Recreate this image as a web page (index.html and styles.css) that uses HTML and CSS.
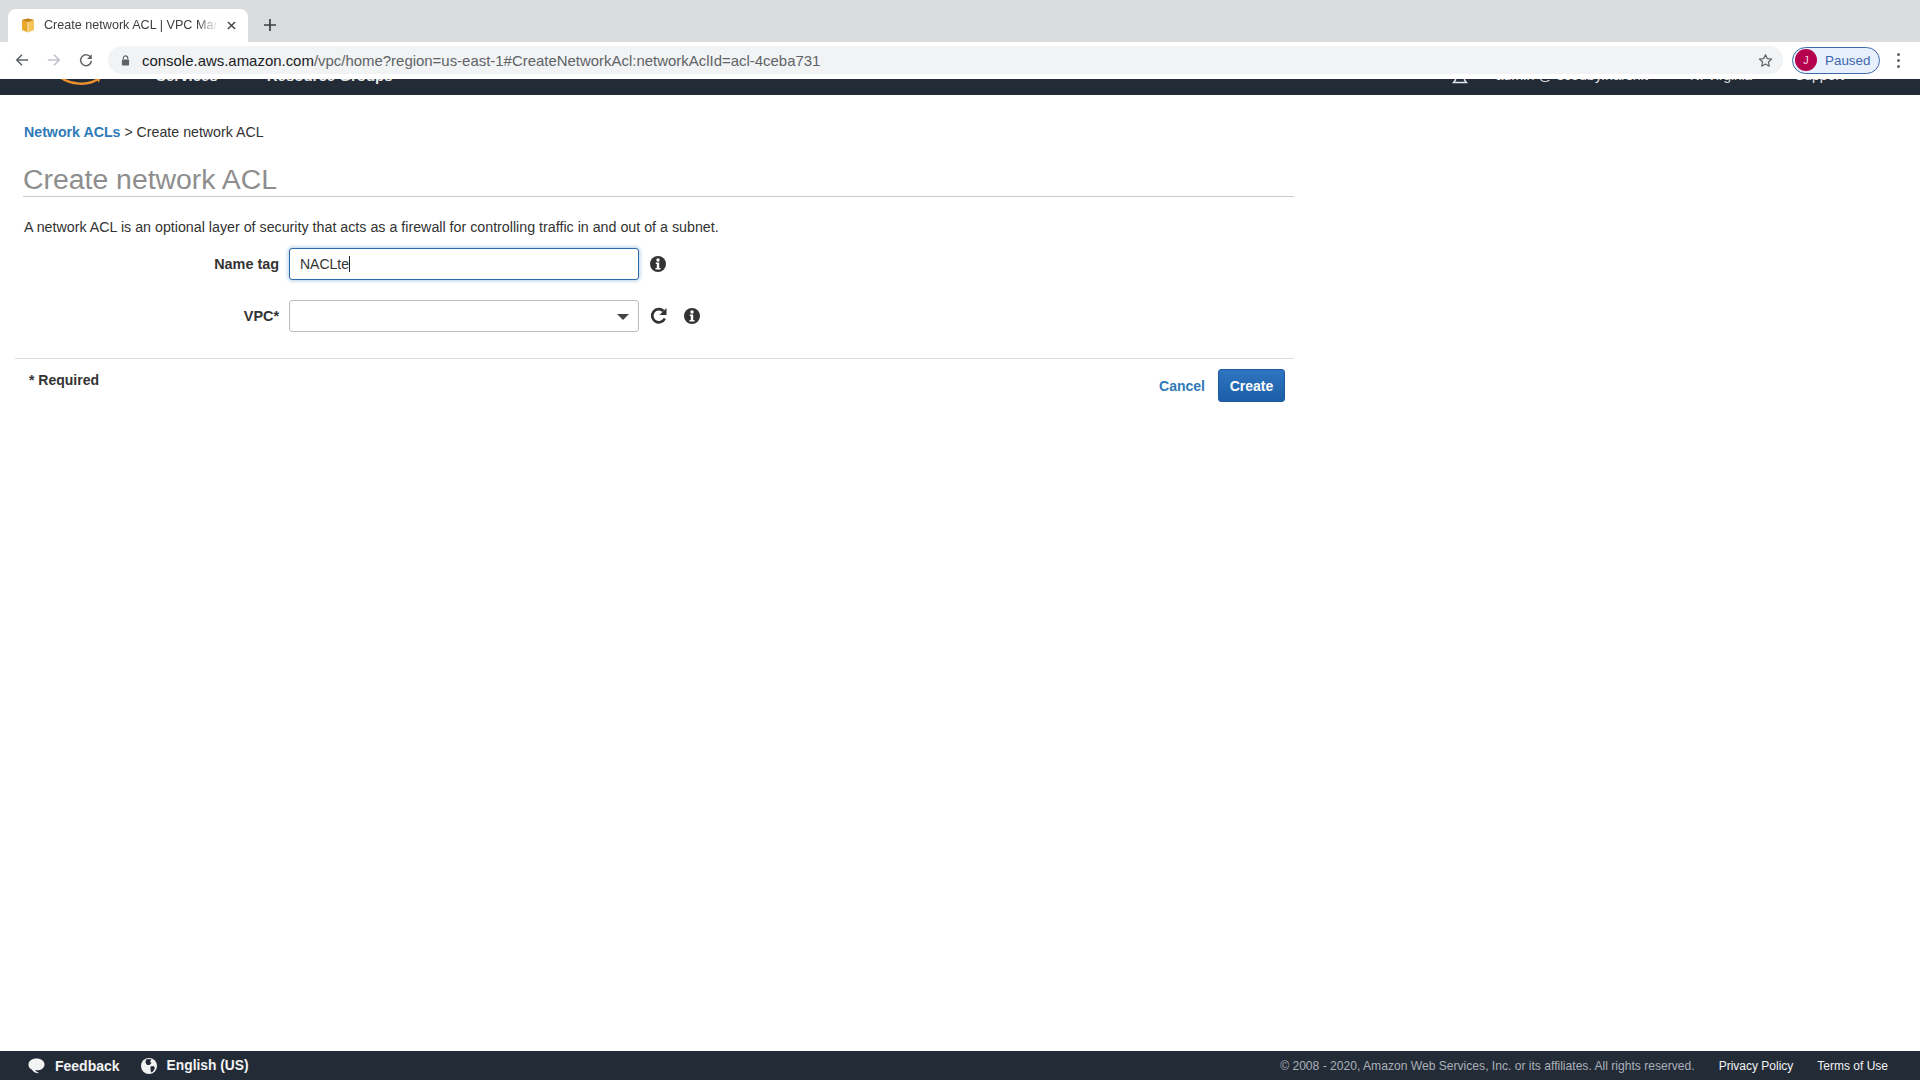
FILE: index.html
```html
<!DOCTYPE html>
<html lang="en">
<head>
  <meta charset="UTF-8">
  <title>Create network ACL | VPC Management Console</title>
  <link rel="stylesheet" href="styles.css">
</head>
<body>
  <div class="tabstrip">
    <div class="tab">
      <svg class="tab-icon" viewBox="0 0 16 16"><path d="M8 1.500 2 3v10l6 2.500z" fill="#e8a92c"/><path d="M8 1.500 14 3v10l-6 2.500z" fill="#f5c35a"/><path d="M2 3l6 2 6-2-6-1.500z" fill="#c9851c"/><path d="M8 5v10.500" stroke="#fff" stroke-width=".7"/></svg>
      <span class="tab-title">Create network ACL | VPC Management Console</span>
      <svg class="tab-close" viewBox="0 0 10 10"><path d="M1 1l8 8M9 1 1 9" stroke="#3c4043" stroke-width="1.500"/></svg>
    </div>
    <svg class="tab-new" viewBox="0 0 12 12"><path d="M6 0v12M0 6h12" stroke="#3c4043" stroke-width="1.700"/></svg>
  </div>

  <div class="toolbar">
    <svg class="nav-btn" viewBox="0 0 16 16"><path d="M15 8H2M8 2 2 8l6 6" fill="none" stroke="#5f6368" stroke-width="1.700"/></svg>
    <svg class="nav-btn off" viewBox="0 0 16 16"><path d="M1 8h13M8 2l6 6-6 6" fill="none" stroke="#bdc1c6" stroke-width="1.700"/></svg>
    <svg class="nav-btn" viewBox="0 0 16 16"><path d="M13.600 5.500A6.200 6.200 0 1 0 14.200 9" fill="none" stroke="#5f6368" stroke-width="1.700"/><path d="M14.600 1.400v5.400H9.200z" fill="#5f6368"/></svg>
    <div class="omnibox">
      <svg class="lock" viewBox="0 0 10 12"><path d="M2.500 5V3.400a2.500 2.500 0 0 1 5 0V5" fill="none" stroke="#5f6368" stroke-width="1.200"/><rect x="1" y="5" width="8" height="6.500" rx="1" fill="#5f6368"/></svg>
      <span class="url"><b>console.aws.amazon.com</b>/vpc/home?region=us-east-1#CreateNetworkAcl:networkAclId=acl-4ceba731</span>
      <svg class="star" viewBox="0 0 16 16"><path d="M8 1.800l1.900 4.200 4.600.5-3.400 3.100.9 4.500L8 11.800l-4 2.300.9-4.500L1.500 6.500l4.600-.5z" fill="none" stroke="#5f6368" stroke-width="1.300" stroke-linejoin="round"/></svg>
    </div>
    <div class="profile">
      <span class="avatar">J</span>
      <span class="paused">Paused</span>
    </div>
    <div class="kebab"><i></i><i></i><i></i></div>
  </div>

  <div class="awsnav">
    <div class="awsnav-inner">
      <svg class="smile" viewBox="0 0 44 12"><path d="M2 1c10 8 28 9 38 2" fill="none" stroke="#ec912d" stroke-width="2.400"/><path d="M36 1l7-.5-2 6z" fill="#ec912d"/></svg>
      <span class="navitem services">Services</span>
      <span class="navitem groups">Resource Groups</span>
      <span class="navitem pin">*</span>
      <svg class="bell" viewBox="0 0 16 16"><path d="M8 1c3 0 4.500 2.500 4.500 5v4l2 2.500h-13l2-2.500V6C3.500 3.500 5 1 8 1z" fill="none" stroke="#e6e8ea" stroke-width="1.400"/></svg>
      <span class="navitem account">admin @ scouby.harshit</span>
      <span class="navitem region">N. Virginia</span>
      <span class="navitem support">Support</span>
    </div>
  </div>

  <main class="page">
    <div class="crumbs"><a class="link" href="#">Network ACLs</a> &gt; Create network ACL</div>
    <h1>Create network ACL</h1>
    <p class="intro">A network ACL is an optional layer of security that acts as a firewall for controlling traffic in and out of a subnet.</p>

    <div class="row first">
      <label class="row-label">Name tag</label>
      <div class="field focused">NACLte<span class="caret"></span></div>
      <svg class="info" viewBox="0 0 16 16"><circle cx="8" cy="8" r="8" fill="#333"/><circle cx="8" cy="4" r="1.700" fill="#fff"/><path d="M5.800 6.500h3.400v5.500h1.300v1.600h-5v-1.600h1.300V8.100H5.800z" fill="#fff"/></svg>
    </div>
    <div class="row second">
      <label class="row-label">VPC*</label>
      <div class="field select"><span class="arrow"></span></div>
      <svg class="refresh" viewBox="0 0 18 18"><path d="M14.800 11.500A6.600 6.600 0 1 1 13.500 4" fill="none" stroke="#333" stroke-width="2.700"/><path d="M16.500 1v7h-7z" fill="#333"/></svg>
      <svg class="info spaced" viewBox="0 0 16 16"><circle cx="8" cy="8" r="8" fill="#333"/><circle cx="8" cy="4" r="1.700" fill="#fff"/><path d="M5.800 6.500h3.400v5.500h1.300v1.600h-5v-1.600h1.300V8.100H5.800z" fill="#fff"/></svg>
    </div>

    <div class="actions">
      <span class="required">* Required</span>
      <div class="buttons">
        <a class="cancel" href="#">Cancel</a>
        <button class="btn-create">Create</button>
      </div>
    </div>
  </main>

  <footer class="footer">
    <svg class="foot-icon" viewBox="0 0 18 16"><path d="M9 0c5 0 8.500 2.800 8.500 6.300S14 12.600 9.500 12.600c-.7 0-1.300 0-2-.1.800 1 2.500 2.400 4.500 3-3 .4-6.500-.8-8-3.800C1.600 10.700.5 8.700.5 6.300.5 2.800 4 0 9 0z" fill="#f2f3f3"/></svg>
    <span class="foot-strong feedback">Feedback</span>
    <svg class="foot-icon globe" viewBox="0 0 16 16"><circle cx="8" cy="8" r="8" fill="#f2f3f3"/><path d="M5 1.500c2-.8 4-.6 5.500 0L9 3.500l1.500 1.500-2 2H6L4.500 4.500zM9.500 8.500l3-.5 1.500 2-2 3.500-2 1-.5-3z" fill="#232b37"/></svg>
    <span class="foot-strong lang">English (US)</span>
    <span class="copyright">© 2008 - 2020, Amazon Web Services, Inc. or its affiliates. All rights reserved.</span>
    <a class="foot-link" href="#">Privacy Policy</a>
    <a class="foot-link terms" href="#">Terms of Use</a>
  </footer>
</body>
</html>
```

FILE: styles.css
```css
html, body {
  height: 100%;
}

body {
  margin: 0;
  display: flex;
  flex-direction: column;
  height: 1080px;
  overflow: hidden;
  background-color: #fff;
  color: #333;
  font-family: "Liberation Sans", Arial, sans-serif;
  font-size: 14.2px;
}

/* browser chrome */
.tabstrip {
  height: 42px;
  flex: none;
  display: flex;
  align-items: flex-end;
  background-color: #dadce0;
  padding-left: 8px;
}

.tab {
  width: 240px;
  height: 33px;
  display: flex;
  align-items: center;
  box-sizing: border-box;
  padding: 0 12px 1px;
  background-color: #fff;
  border-radius: 8px 8px 0 0;
}

.tab-icon {
  width: 16px;
  height: 16px;
  flex: none;
}

.tab-title {
  width: 174px;
  margin-left: 8px;
  white-space: nowrap;
  overflow: hidden;
  font-size: 12.6px;
  color: #3c4043;
  -webkit-mask-image: linear-gradient(to right, #000 88%, transparent);
  mask-image: linear-gradient(to right, #000 88%, transparent);
}

.tab-close {
  width: 9px;
  height: 9px;
  margin-left: 9px;
  flex: none;
}

.tab-new {
  width: 12px;
  height: 12px;
  margin: 0 0 11px 16px;
}

.toolbar {
  height: 37px;
  flex: none;
  display: flex;
  align-items: center;
  box-sizing: border-box;
  padding: 0 0 1px 15px;
  background-color: #fff;
}

.nav-btn {
  width: 14px;
  height: 14px;
  margin-right: 18px;
  flex: none;
}

.omnibox {
  width: 1675px;
  height: 28px;
  margin-left: -3px;
  display: flex;
  align-items: center;
  box-sizing: border-box;
  padding: 0 10px 0 13px;
  background-color: #f1f3f4;
  border-radius: 14px;
}

.lock {
  width: 9px;
  height: 11px;
  flex: none;
}

.url {
  flex: 1;
  margin-left: 12px;
  font-size: 14.95px;
  color: #5f6368;
  white-space: nowrap;
}

.url b {
  font-weight: normal;
  color: #202124;
}

.star {
  width: 15px;
  height: 15px;
  flex: none;
}

.profile {
  width: 88px;
  height: 27px;
  margin-left: 9px;
  display: flex;
  align-items: center;
  box-sizing: border-box;
  padding-left: 2px;
  background-color: #e8f0fe;
  border: 1px solid #3f6aa8;
  border-radius: 14px;
}

.avatar {
  width: 22px;
  height: 22px;
  display: flex;
  align-items: center;
  justify-content: center;
  background-color: #b4004e;
  border-radius: 50%;
  color: #f8d7e4;
  font-size: 11px;
}

.paused {
  margin-left: 8px;
  font-size: 13.4px;
  color: #3c67ab;
}

.kebab {
  margin-left: 17px;
  display: flex;
  flex-direction: column;
  gap: 3px;
}

.kebab i {
  width: 3px;
  height: 3px;
  border-radius: 50%;
  background-color: #5f6368;
}

/* aws console header, mostly scrolled under the toolbar */
.awsnav {
  height: 16px;
  flex: none;
  overflow: hidden;
  background-color: #232b37;
}

.awsnav-inner {
  height: 40px;
  margin-top: -24px;
  display: flex;
  align-items: center;
  color: #e6e8ea;
  font-size: 14px;
  font-weight: bold;
}

.smile {
  width: 44px;
  height: 12px;
  margin: 14px 0 0 58px;
  flex: none;
}

.navitem {
  white-space: nowrap;
}

.services {
  margin-left: 54px;
  font-size: 15px;
}

.groups {
  margin-left: 49px;
  font-size: 15px;
}

.pin {
  margin-left: 55px;
}

.bell {
  width: 16px;
  height: 16px;
  margin: 5px 0 0 auto;
  flex: none;
}

.account {
  margin-left: 27px;
  font-size: 14.3px;
  font-weight: normal;
}

.region {
  margin-left: 42px;
  font-size: 13.5px;
  font-weight: normal;
}

.support {
  margin: 0 76px 0 43px;
  font-size: 14px;
  font-weight: normal;
}

/* form */
.page {
  flex: 1;
  width: 1294px;
  box-sizing: border-box;
  padding: 28px 0 0 15px;
}

.crumbs {
  margin-left: 9px;
  line-height: 18px;
}

.link {
  color: #2f7ab8;
  font-weight: bold;
  text-decoration: none;
}

h1 {
  margin: 21px 0 0 8px;
  width: 1271px;
  height: 35px;
  box-sizing: border-box;
  border-bottom: 1px solid #ccc;
  font-size: 28.4px;
  font-weight: normal;
  line-height: 34px;
  color: #8e8e8e;
}

.intro {
  margin: 21px 0 0 9px;
  font-size: 14.25px;
  line-height: 18px;
}

.row {
  display: flex;
  align-items: center;
  height: 32px;
}

.row.first {
  margin-top: 12px;
}

.row.second {
  margin-top: 20px;
}

.row-label {
  width: 264px;
  margin-right: 10px;
  text-align: right;
  font-weight: bold;
  font-size: 14.4px;
}

.field {
  width: 350px;
  height: 32px;
  display: flex;
  align-items: center;
  box-sizing: border-box;
  padding-left: 10px;
  background-color: #fff;
  border: 1px solid #bbb;
  border-radius: 3px;
  font-size: 14px;
  position: relative;
}

.field.focused {
  border-color: #2d6bad;
  box-shadow: 0 0 4px rgba(45, 120, 190, .55);
}

.caret {
  width: 1px;
  height: 16px;
  background-color: #222;
}

.arrow {
  position: absolute;
  right: 9px;
  top: 13px;
  border-style: solid;
  border-width: 6px 6px 0;
  border-color: #444 transparent transparent;
}

.info {
  width: 16px;
  height: 16px;
  margin-left: 11px;
  flex: none;
}

.info.spaced {
  margin-left: 16px;
}

.refresh {
  width: 18px;
  height: 18px;
  margin-left: 11px;
  flex: none;
}

.actions {
  margin-top: 26px;
  padding: 0 9px 0 14px;
  border-top: 1px solid #ddd;
  display: flex;
  justify-content: space-between;
  align-items: flex-start;
}

.required {
  margin-top: 12px;
  font-weight: bold;
  font-size: 14px;
  line-height: 18px;
}

.buttons {
  margin-top: 10px;
  display: flex;
  align-items: center;
}

.cancel {
  color: #2f7ab8;
  font-weight: bold;
  font-size: 14px;
  text-decoration: none;
}

.btn-create {
  width: 67px;
  height: 33px;
  margin-left: 13px;
  padding: 0;
  border: 1px solid #1f5aa0;
  border-radius: 3px;
  background: linear-gradient(#2f74c0, #1c5fa8);
  color: #fff;
  font-family: inherit;
  font-weight: bold;
  font-size: 14px;
}

/* footer */
.footer {
  height: 29px;
  flex: none;
  display: flex;
  align-items: center;
  box-sizing: border-box;
  padding: 0 32px 0 28px;
  background-color: #232b37;
  color: #f2f3f3;
}

.foot-icon {
  width: 17px;
  height: 16px;
  flex: none;
}

.foot-strong {
  margin-left: 10px;
  font-weight: bold;
  font-size: 14px;
}

.feedback {
  margin-right: 21px;
}

.lang {
  font-size: 13.8px;
}

.globe {
  width: 16px;
}

.copyright {
  margin-left: auto;
  font-size: 12.1px;
  color: #aab0b7;
}

.foot-link {
  margin-left: 24px;
  font-size: 12px;
  color: #f2f3f3;
  text-decoration: none;
}
```
